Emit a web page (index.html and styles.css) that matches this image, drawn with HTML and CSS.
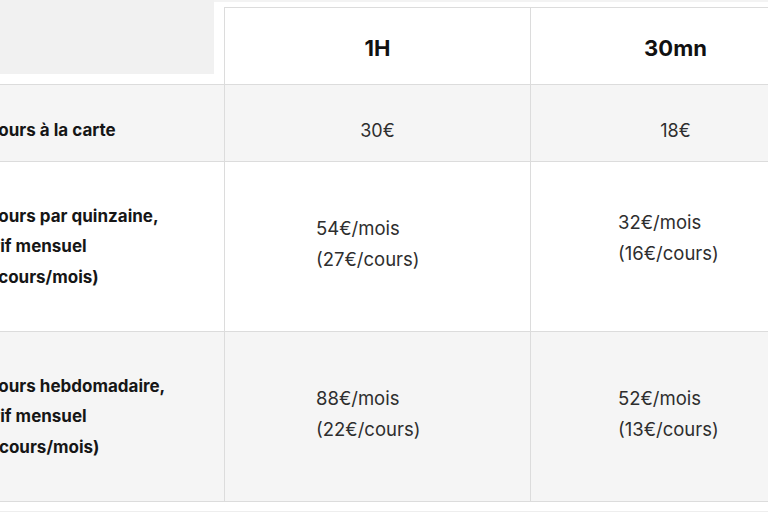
FILE: index.html
```html
<!DOCTYPE html>
<html lang="fr">
<head>
<meta charset="utf-8">
<title>Tarifs</title>
<link rel="stylesheet" href="styles.css">
</head>
<body>
<div class="pricing">
  <div class="row head">
    <div class="corner"><div class="corner-box"></div></div>
    <div class="th">1H</div>
    <div class="th">30mn</div>
  </div>
  <div class="row shade first">
    <div class="label">1 cours à la carte</div>
    <div class="price center">30€</div>
    <div class="price center">18€</div>
  </div>
  <div class="row tall">
    <div class="label">
      <span>1 cours par quinzaine,</span>
      <span>tarif mensuel</span>
      <span>(2 cours/mois)</span>
    </div>
    <div class="price c2"><div class="stack"><span>54€/mois</span><span>(27€/cours)</span></div></div>
    <div class="price c3 lift"><div class="stack"><span>32€/mois</span><span>(16€/cours)</span></div></div>
  </div>
  <div class="row tall shade last">
    <div class="label">
      <span>1 cours hebdomadaire,</span>
      <span>tarif mensuel</span>
      <span>(4 cours/mois)</span>
    </div>
    <div class="price c2"><div class="stack"><span>88€/mois</span><span>(22€/cours)</span></div></div>
    <div class="price c3"><div class="stack"><span>52€/mois</span><span>(13€/cours)</span></div></div>
  </div>
  <div class="after"></div>
</div>
</body>
</html>
```
FILE: styles.css
```css
html, body {
  margin: 0;
  padding: 0;
  background: #ffffff;
  overflow: hidden;
  width: 768px;
  height: 512px;
}
body {
  font-family: "Inter", "Open Sans", sans-serif;
  color: #161616;
}
.pricing {
  margin-left: -230px;
  width: 1050px;
}
.row {
  display: grid;
  grid-template-columns: 454px 306px 290px;
}
.head {
  height: 84px;
  background: linear-gradient(#f3f3f3 0 2px, #ffffff 2px);
}
.corner-box {
  width: 444px;
  height: 74px;
  background: #f1f1f1;
}
.th {
  margin-top: 7px;
  border-top: 1px solid #dcdcdc;
  border-left: 1px solid #dcdcdc;
  background: #ffffff;
  display: flex;
  align-items: center;
  justify-content: center;
  padding-top: 4px;
  font-size: 22px;
  font-weight: 700;
  color: #111111;
}
.row + .row {
  border-top: 1px solid #dcdcdc;
}
.shade {
  background: #f5f5f5;
}
.first {
  height: 76px;
}
.first > div {
  padding-top: 14px;
}
.tall {
  height: 169px;
}
.last {
  border-bottom: 1px solid #dcdcdc;
}
.label {
  display: flex;
  flex-direction: column;
  justify-content: center;
  padding-left: 207px;
  font-size: 17px;
  font-weight: 700;
  line-height: 30.5px;
  color: #161616;
}
.price {
  border-left: 1px solid #dcdcdc;
  display: flex;
  align-items: center;
  padding-bottom: 6px;
  font-size: 18.5px;
  font-weight: 400;
  color: #2e2e2e;
}
.first > .price.center {
  justify-content: center;
  padding-bottom: 0;
  font-size: 18px;
}
.c2 {
  padding-left: 91px;
}
.c3 {
  padding-left: 87px;
}
.price.lift {
  padding-bottom: 18px;
}
.stack {
  display: flex;
  flex-direction: column;
  line-height: 31px;
}
.after {
  height: 9px;
  border-bottom: 1px solid #eeeeee;
}
```
